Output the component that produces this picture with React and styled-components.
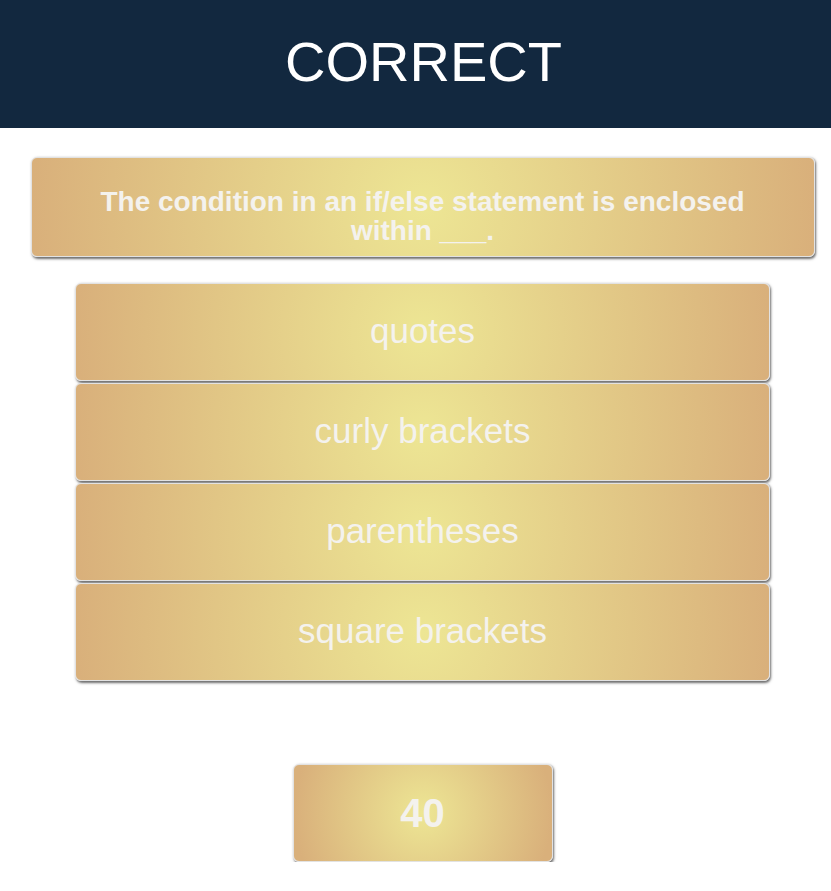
import React from "react";
import styled, { createGlobalStyle } from "styled-components";

const Global = createGlobalStyle`
  html, body { margin: 0; padding: 0; background: #ffffff; }
  body { font-family: "Liberation Sans", Arial, sans-serif; }
`;

const Page = styled.div`
  display: flex;
  flex-direction: column;
  width: 831px;
`;

const Header = styled.header`
  background: #12283f;
  height: 128px;
  display: flex;
  align-items: center;
  justify-content: center;
  padding-left: 16px;
  box-sizing: border-box;
`;

const Title = styled.h1`
  margin: 0;
  color: #ffffff;
  font-size: 56px;
  font-weight: 400;
  line-height: 1;
  margin-top: -4px;
`;

const Main = styled.main`
  display: flex;
  flex-direction: column;
  align-items: center;
  padding-left: 14px;
  box-sizing: border-box;
`;

const Card = styled.div`
  box-sizing: border-box;
  display: flex;
  align-items: center;
  justify-content: center;
  text-align: center;
  color: #f4f2ee;
  border: 1px solid #e2e2e2;
  border-radius: 6px;
  box-shadow: 1px 1.5px 2.5px rgba(60, 60, 60, 0.75);
  background: radial-gradient(circle farthest-side at center, #ede694 0%, #d9b07b 100%);
`;

const Question = styled(Card)`
  width: 784px;
  height: 100px;
  margin-top: 29px;
  padding: 18px 60px 0;
  font-size: 28px;
  font-weight: 700;
  line-height: 29px;
`;

const Answers = styled.div`
  display: flex;
  flex-direction: column;
  gap: 2px;
  margin-top: 26px;
`;

const Answer = styled(Card)`
  width: 695px;
  height: 98px;
  font-size: 35px;
  font-weight: 400;
  padding-bottom: 3px;
`;

const Score = styled(Card)`
  width: 260px;
  height: 98px;
  margin-top: 83px;
  font-size: 40px;
  font-weight: 700;
`;

const answers = ["quotes", "curly brackets", "parentheses", "square brackets"];

export default function App() {
  return (
    <Page>
      <Global />
      <Header>
        <Title>CORRECT</Title>
      </Header>
      <Main>
        <Question>The condition in an if/else statement is enclosed within ___.</Question>
        <Answers>
          {answers.map((a) => (
            <Answer key={a}>{a}</Answer>
          ))}
        </Answers>
        <Score>40</Score>
      </Main>
    </Page>
  );
}
